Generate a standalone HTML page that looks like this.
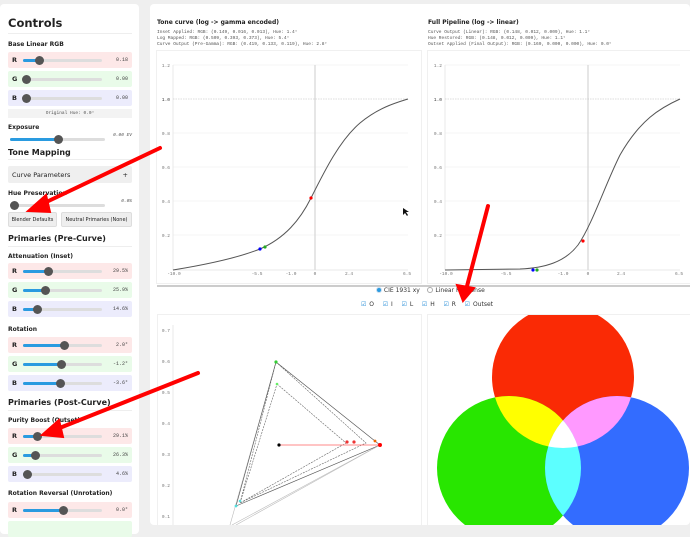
<!DOCTYPE html>
<html><head><meta charset="utf-8"><style>
*{margin:0;padding:0;box-sizing:border-box}
body{width:690px;height:525px;overflow:hidden;background:#efefef;font-family:"Liberation Sans",sans-serif;position:relative;color:#222}
.a{position:absolute}
.side{left:0;top:4px;width:139px;height:530px;background:#fff;border-radius:4px}
.sb{font-family:"DejaVu Sans","Liberation Sans",sans-serif}
.h1{font-size:11.5px;font-weight:bold}
.h2{font-size:8px;font-weight:bold}
.lb{font-size:6px;font-weight:bold}
.row{left:8px;width:124px;height:16px;border-radius:2px}
.rr{background:#fde8e8}.rg{background:#e9fbe9}.rb{background:#ececfc}
.row b{position:absolute;left:4px;top:4px;font-size:6.5px}
.row i{position:absolute;right:4px;top:5px;font-size:5px;font-style:normal;font-family:"Liberation Mono",monospace;color:#444}
.tr{position:absolute;left:15px;top:7px;width:79px;height:3px;background:#ddd;border-radius:2px}
.tr span{position:absolute;left:0;top:0;height:3px;background:#2a9be0;border-radius:2px}
.tr em{position:absolute;top:-3px;width:9px;height:9px;border-radius:50%;background:#555;margin-left:-4px}
.hr{border-bottom:1px solid #eee}
.mono{font-family:"Liberation Mono",monospace;font-size:4.5px;color:#555;line-height:6px}
.card{background:#fff}
</style></head><body>
<div class="a side"></div>
<div class="sb">
<div class="a h1" style="left:8px;top:16px">Controls</div>
<div class="a hr" style="left:8px;top:33px;width:124px"></div>
<div class="a lb" style="left:8px;top:41px">Base Linear RGB</div>
<div class="a row rr" style="top:52px"><b>R</b><div class="tr"><span style="width:16px"></span><em style="left:16px"></em></div><i>0.18</i></div>
<div class="a row rg" style="top:71px"><b>G</b><div class="tr"><em style="left:3px"></em></div><i>0.00</i></div>
<div class="a row rb" style="top:90px"><b>B</b><div class="tr"><em style="left:3px"></em></div><i>0.00</i></div>
<div class="a mono" style="left:8px;top:109px;width:124px;height:9px;background:#f3f3f3;text-align:center;padding-top:2px">Original Hue: 0.0°</div>
<div class="a lb" style="left:8px;top:124px">Exposure</div>
<div class="a" style="left:8px;top:131px;width:124px;height:10px"><div class="tr" style="left:2px;width:95px"><span style="width:48px"></span><em style="left:48px"></em></div><i class="a mono" style="right:0;top:2px">0.00 EV</i></div>
<div class="a h2" style="left:8px;top:148px">Tone Mapping</div>
<div class="a hr" style="left:8px;top:159px;width:124px"></div>
<div class="a" style="left:8px;top:166px;width:124px;height:17px;background:#efefef;border-radius:2px;font-size:6.5px;padding:5px 4px">Curve Parameters<span style="float:right">+</span></div>
<div class="a lb" style="left:8px;top:190px">Hue Preservation</div>
<div class="a" style="left:8px;top:197px;width:124px;height:10px"><div class="tr" style="left:2px;width:95px"><em style="left:4px"></em></div><i class="a mono" style="right:0;top:2px">0.0%</i></div>
<div class="a" style="left:8px;top:212px;width:49px;height:15px;background:#eee;border:1px solid #ddd;border-radius:2px;font-size:5px;text-align:center;padding-top:4px">Blender Defaults</div>
<div class="a" style="left:61px;top:212px;width:71px;height:15px;background:#eee;border:1px solid #ddd;border-radius:2px;font-size:5px;text-align:center;padding-top:4px">Neutral Primaries (None)</div>
<div class="a h2" style="left:8px;top:234px">Primaries (Pre-Curve)</div>
<div class="a hr" style="left:8px;top:246px;width:124px"></div>
<div class="a lb" style="left:8px;top:253px">Attenuation (Inset)</div>
<div class="a row rr" style="top:263px"><b>R</b><div class="tr"><span style="width:25px"></span><em style="left:25px"></em></div><i>29.5%</i></div>
<div class="a row rg" style="top:282px"><b>G</b><div class="tr"><span style="width:22px"></span><em style="left:22px"></em></div><i>25.9%</i></div>
<div class="a row rb" style="top:301px"><b>B</b><div class="tr"><span style="width:14px"></span><em style="left:14px"></em></div><i>14.6%</i></div>
<div class="a lb" style="left:8px;top:326px">Rotation</div>
<div class="a row rr" style="top:337px"><b>R</b><div class="tr"><span style="width:41px"></span><em style="left:41px"></em></div><i>2.0°</i></div>
<div class="a row rg" style="top:356px"><b>G</b><div class="tr"><span style="width:38px"></span><em style="left:38px"></em></div><i>-1.2°</i></div>
<div class="a row rb" style="top:375px"><b>B</b><div class="tr"><span style="width:37px"></span><em style="left:37px"></em></div><i>-3.6°</i></div>
<div class="a h2" style="left:8px;top:398px">Primaries (Post-Curve)</div>
<div class="a hr" style="left:8px;top:410px;width:124px"></div>
<div class="a lb" style="left:8px;top:417px">Purity Boost (Outset)</div>
<div class="a row rr" style="top:428px"><b>R</b><div class="tr"><span style="width:14px"></span><em style="left:14px"></em></div><i>29.1%</i></div>
<div class="a row rg" style="top:447px"><b>G</b><div class="tr"><span style="width:12px"></span><em style="left:12px"></em></div><i>26.3%</i></div>
<div class="a row rb" style="top:466px"><b>B</b><div class="tr"><span style="width:4px"></span><em style="left:4px"></em></div><i>4.6%</i></div>
<div class="a lb" style="left:8px;top:490px">Rotation Reversal (Unrotation)</div>
<div class="a row rr" style="top:502px"><b>R</b><div class="tr"><span style="width:40px"></span><em style="left:40px"></em></div><i>0.0°</i></div>
<div class="a row rg" style="top:521px"></div>
</div>

<div class="a card" style="left:150px;top:4px;width:540px;height:521px;border-radius:4px"></div>
<div class="a sb" style="left:157px;top:19px;font-size:6px;font-weight:bold">Tone curve (log -&gt; gamma encoded)</div>
<div class="a mono" style="left:157px;top:30px">Inset Applied: RGB: (0.149, 0.016, 0.013), Hue: 1.4°<br>Log Mapped: RGB: (0.509, 0.393, 0.373), Hue: 5.4°<br>Curve Output (Pre-Gamma): RGB: (0.419, 0.133, 0.119), Hue: 2.8°</div>
<div class="a sb" style="left:428px;top:19px;font-size:6px;font-weight:bold">Full Pipeline (log -&gt; linear)</div>
<div class="a mono" style="left:428px;top:30px">Curve Output (Linear): RGB: (0.148, 0.012, 0.009), Hue: 1.1°<br>Hue Restored: RGB: (0.148, 0.012, 0.009), Hue: 1.1°<br>Outset Applied (Final Output): RGB: (0.169, 0.000, 0.000), Hue: 0.0°</div>

<svg class="a" style="left:0;top:0" width="690" height="525" font-family="Liberation Mono" font-size="4.5" fill="#777">
<rect x="156.5" y="50.5" width="265" height="233" fill="none" stroke="#f0f0f0"/>
<rect x="427.5" y="50.5" width="270" height="233" fill="none" stroke="#f0f0f0"/>
<g stroke="#f4f4f4"><line x1="173" y1="65" x2="408" y2="65"/><line x1="173" y1="133" x2="408" y2="133"/><line x1="173" y1="167" x2="408" y2="167"/><line x1="173" y1="201" x2="408" y2="201"/><line x1="173" y1="235" x2="408" y2="235"/>
<line x1="445" y1="65" x2="680" y2="65"/><line x1="445" y1="133" x2="680" y2="133"/><line x1="445" y1="167" x2="680" y2="167"/><line x1="445" y1="201" x2="680" y2="201"/><line x1="445" y1="235" x2="680" y2="235"/></g>
<g stroke="#e8e8e8"><line x1="173" y1="65" x2="173" y2="270"/><line x1="173" y1="270" x2="408" y2="270"/><line x1="445" y1="65" x2="445" y2="270"/><line x1="445" y1="270" x2="680" y2="270"/></g>
<line x1="315" y1="65" x2="315" y2="270" stroke="#ddd" stroke-width="1.5"/>
<line x1="588" y1="65" x2="588" y2="270" stroke="#ddd" stroke-width="1.5"/>
<line x1="173" y1="99" x2="408" y2="99" stroke="#bbb" stroke-width=".5" stroke-dasharray="1.5 1"/>
<line x1="445" y1="99" x2="680" y2="99" stroke="#bbb" stroke-width=".5" stroke-dasharray="1.5 1"/>
<g text-anchor="end"><text x="170" y="67">1.2</text><text x="170" y="101" fill="#333">1.0</text><text x="170" y="135">0.8</text><text x="170" y="169">0.6</text><text x="170" y="203">0.4</text><text x="170" y="237">0.2</text>
<text x="442" y="67">1.2</text><text x="442" y="101" fill="#333">1.0</text><text x="442" y="135">0.8</text><text x="442" y="169">0.6</text><text x="442" y="203">0.4</text><text x="442" y="237">0.2</text></g>
<g text-anchor="middle"><text x="174" y="275">-10.0</text><text x="257" y="275">-5.5</text><text x="291" y="275">-1.0</text><text x="315" y="275">0</text><text x="349" y="275">2.4</text><text x="407" y="275">6.5</text>
<text x="446" y="275">-10.0</text><text x="506" y="275">-5.5</text><text x="563" y="275">-1.0</text><text x="588" y="275">0</text><text x="621" y="275">2.4</text><text x="679" y="275">6.5</text></g>
<path d="M173,270 C210,264 240,257 260,249 C285,238 300,220 311,198 C325,170 340,140 360,123 C378,108 395,103 408,99" fill="none" stroke="#555" stroke-width="1"/>
<path d="M445,270 L520,269 C545,268 565,262 578,245 C592,225 605,185 620,155 C640,120 660,108 680,99" fill="none" stroke="#555" stroke-width="1"/>
<circle cx="260" cy="249" r="1.6" fill="#00f"/><circle cx="265" cy="247" r="1.6" fill="#2a2"/><circle cx="311" cy="198" r="1.6" fill="red"/>
<circle cx="533" cy="270" r="1.6" fill="#00f"/><circle cx="537" cy="270" r="1.6" fill="#2a2"/><circle cx="583" cy="241" r="1.6" fill="red"/>
<path d="M403,208 l0,7 l2,-2 l2,3 l1,-1 l-2,-3 l3,0z" fill="#111"/>
<line x1="157" y1="286" x2="690" y2="286" stroke="#bbb" stroke-width="1.5"/>
</svg>
<div class="a sb" style="left:376px;top:287px;font-size:6px;color:#333"><span style="display:inline-block;width:6px;height:6px;border-radius:50%;background:#2a9be0;border:1.5px solid #cde;vertical-align:-1px"></span> CIE 1931 xy &nbsp;&nbsp; <span style="display:inline-block;width:6px;height:6px;border-radius:50%;border:1px solid #aaa;vertical-align:-1px"></span> Linear Response</div>
<div class="a sb" style="left:361px;top:301px;font-size:6px;color:#333;word-spacing:1px">
<span style="color:#2a8fd8">☑</span> O &nbsp;&nbsp;<span style="color:#2a8fd8">☑</span> I &nbsp;&nbsp;<span style="color:#2a8fd8">☑</span> L &nbsp;&nbsp;<span style="color:#2a8fd8">☑</span> H &nbsp;&nbsp;<span style="color:#2a8fd8">☑</span> R &nbsp;&nbsp;<span style="color:#2a8fd8">☑</span> Outset</div>
<svg class="a" style="left:0;top:0" width="690" height="525" font-family="Liberation Mono" font-size="4.5" fill="#777">
<defs>
<clipPath id="pan"><rect x="428" y="315" width="262" height="210"/></clipPath>
<clipPath id="cr"><circle cx="563" cy="377" r="71"/></clipPath>
<clipPath id="cg"><circle cx="509" cy="468" r="72"/></clipPath>
</defs>
<rect x="157.5" y="314.5" width="264" height="215" fill="none" stroke="#f0f0f0"/>
<rect x="427.5" y="314.5" width="270" height="215" fill="none" stroke="#f0f0f0"/>
<line x1="173" y1="325" x2="173" y2="525" stroke="#e8e8e8"/>
<g text-anchor="end"><text x="170" y="332">0.7</text><text x="170" y="363">0.6</text><text x="170" y="394">0.5</text><text x="170" y="425">0.4</text><text x="170" y="456">0.3</text><text x="170" y="487">0.2</text><text x="170" y="518">0.1</text></g>
<g fill="none" stroke-width=".6">
<path d="M230,525 L276,362 L380,445 L232,525" stroke="#bbb"/>
<path d="M276,362 L380,445 L236,506 Z" stroke="#555"/>
<path d="M276,362 L366,443 L240,503 Z" stroke="#666" stroke-dasharray="2 1"/>
<path d="M277,384 L346,443 L240,503 Z" stroke="#666" stroke-dasharray="2 1"/>
<line x1="380" y1="445" x2="236" y2="525" stroke="#bbb"/>
</g>
<line x1="279" y1="445" x2="380" y2="445" stroke="#f88" stroke-width="1"/>
<circle cx="279" cy="445" r="1.6" fill="#000"/>
<circle cx="276" cy="362" r="1.6" fill="#3c3"/><circle cx="277" cy="384" r="1.3" fill="#6e6"/>
<circle cx="236" cy="506" r="1.4" fill="#5dd"/><circle cx="240" cy="501" r="1.3" fill="#5dd"/>
<circle cx="347" cy="442" r="1.6" fill="#e33"/><circle cx="354" cy="442" r="1.6" fill="#e33"/><circle cx="375" cy="441" r="1.4" fill="#e60"/><circle cx="380" cy="445" r="2" fill="red"/>
<g clip-path="url(#pan)">
<circle cx="563" cy="377" r="71" fill="#fa2a05"/>
<circle cx="509" cy="468" r="72" fill="#28e600"/>
<circle cx="617" cy="468" r="72" fill="#336cff"/>
<circle cx="509" cy="468" r="72" fill="#ffff00" clip-path="url(#cr)"/>
<circle cx="617" cy="468" r="72" fill="#ff99ff" clip-path="url(#cr)"/>
<circle cx="617" cy="468" r="72" fill="#5cffff" clip-path="url(#cg)"/>
<g clip-path="url(#cr)"><circle cx="617" cy="468" r="72" fill="#fff" clip-path="url(#cg)"/></g>
</g>
<g stroke="#f00" stroke-width="4" stroke-linecap="round" fill="red">
<line x1="160" y1="148" x2="38" y2="206"/><path d="M28,211 L46,195 L50,212Z" stroke-width="2"/>
<line x1="488" y1="206" x2="466" y2="290"/><path d="M463,301 L457,285 L474,288Z" stroke-width="2"/>
<line x1="198" y1="373" x2="52" y2="431"/><path d="M42,435 L59,420 L63,437Z" stroke-width="2"/>
</g>
</svg>
</body></html>
